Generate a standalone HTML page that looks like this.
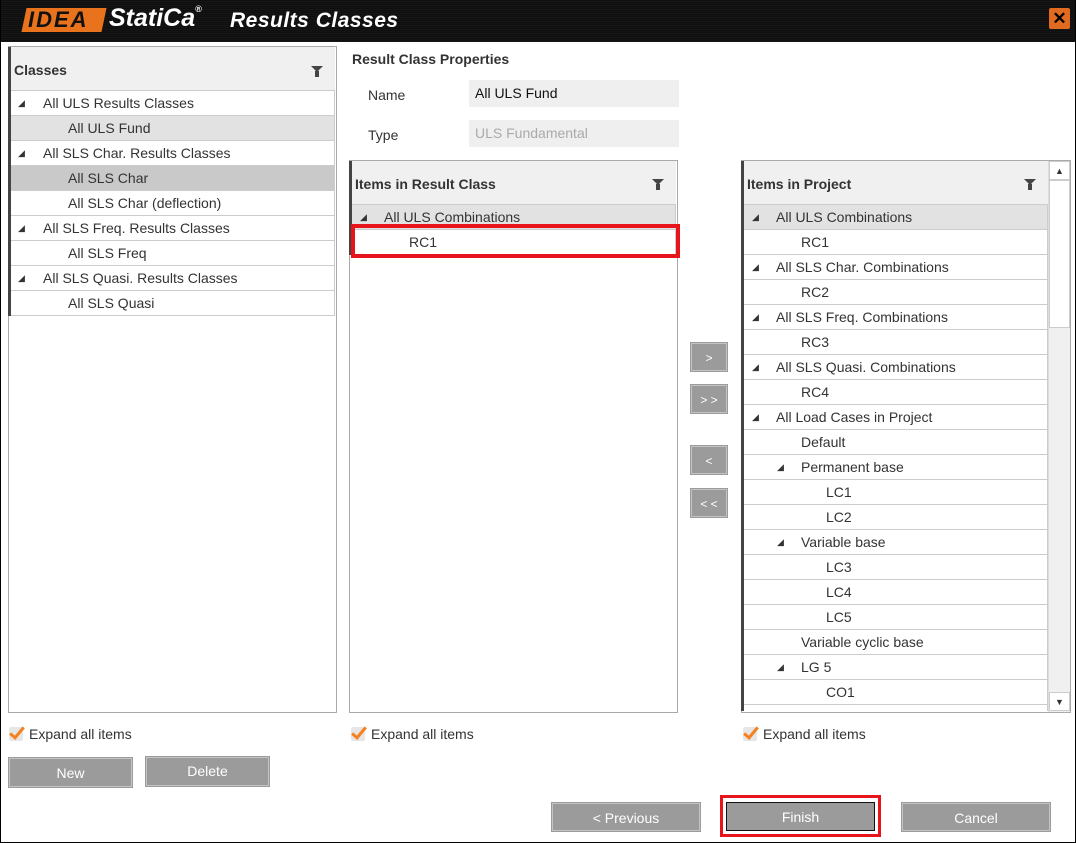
<!DOCTYPE html>
<html><head><meta charset="utf-8"><style>
*{margin:0;padding:0;box-sizing:border-box}
body{width:1076px;height:843px;background:#fff;font-family:"Liberation Sans",sans-serif;font-size:14px;color:#333;position:relative;overflow:hidden}
.a{position:absolute}
.frame{left:0;top:0;width:1076px;height:843px;border:1px solid #000;border-top:none;pointer-events:none}
.title{left:0;top:0;width:1076px;height:42px;background:repeating-linear-gradient(180deg,#0c0c0c 0,#1a1a1a 2px,#050505 3px,#222 4px)}
.box{border:1px solid #aaa;background:#fff}
.hdr{background:#f0f0f0;border-bottom:1px solid #ccc;font-weight:bold;font-size:14px;color:#333}
.bar{background:#444;width:3px}
.r{position:absolute;height:25px;border-bottom:1px solid #ccc;line-height:24px;white-space:nowrap;border-right:1px solid #ccc}
.t{position:absolute;font-size:9px;color:#333}
.btn{position:absolute;background:#9b9b9b;border:1px solid #c4c4c4;outline:1px solid #9b9b9b;color:#fff;text-align:center;font-size:14px}
.inp{position:absolute;background:#efefef;height:27px;line-height:27px;padding-left:6px}
.cb{position:absolute;width:14px;height:14px;background:#e6e6e6;border-radius:2px}
.cb:after{content:"";position:absolute;left:4px;top:-3px;width:5px;height:12px;border:solid #f58220;border-width:0 3px 3px 0;transform:rotate(40deg)}
.filt{position:absolute;width:0;height:0;border-left:6px solid transparent;border-right:6px solid transparent;border-top:6px solid #444}
.filt:after{content:"";position:absolute;left:-2px;top:-1px;width:4px;height:6px;background:#444}
</style></head><body>
<div class="a title"></div>
<div class="a" style="left:24px;top:8px;width:80px;height:24px;background:#e8731c;transform:skewX(-12deg)"></div>
<div class="a" style="left:28px;top:8px;font:italic bold 22px 'Liberation Sans',sans-serif;color:#111;letter-spacing:2px;line-height:24px">IDEA</div>
<div class="a" style="left:109px;top:4px;font:italic bold 25px 'Liberation Sans',sans-serif;color:#fff">StatiCa<sup style="font-size:9px;vertical-align:top">®</sup></div>
<div class="a" style="left:230px;top:9px;font:italic bold 21px 'Liberation Sans',sans-serif;color:#fff;letter-spacing:0.5px">Results Classes</div>
<div class="a" style="left:1049px;top:8px;width:21px;height:21px;background:#e06a20;border-radius:2px;color:#000;font:bold 17px 'Liberation Sans';text-align:center;line-height:21px">✕</div>

<!-- Left panel -->
<div class="a box" style="left:8px;top:46px;width:329px;height:667px"></div>
<div class="a hdr" style="left:9px;top:47px;width:326px;height:44px;line-height:46px;padding-left:5px">Classes</div>
<div class="filt" style="left:311px;top:66px"></div>
<div class="a bar" style="left:8px;top:47px;height:269px"></div>
<div class="r" style="left:11px;top:91px;width:324px"><span class="t" style="left:7px">◢</span><span class="a" style="left:32px">All ULS Results Classes</span></div>
<div class="r" style="left:11px;top:116px;width:324px;background:#e2e2e2"><span class="a" style="left:57px">All ULS Fund</span></div>
<div class="r" style="left:11px;top:141px;width:324px"><span class="t" style="left:7px">◢</span><span class="a" style="left:32px">All SLS Char. Results Classes</span></div>
<div class="r" style="left:11px;top:166px;width:324px;background:#c9c9c9"><span class="a" style="left:57px">All SLS Char</span></div>
<div class="r" style="left:11px;top:191px;width:324px"><span class="a" style="left:57px">All SLS Char (deflection)</span></div>
<div class="r" style="left:11px;top:216px;width:324px"><span class="t" style="left:7px">◢</span><span class="a" style="left:32px">All SLS Freq. Results Classes</span></div>
<div class="r" style="left:11px;top:241px;width:324px"><span class="a" style="left:57px">All SLS Freq</span></div>
<div class="r" style="left:11px;top:266px;width:324px"><span class="t" style="left:7px">◢</span><span class="a" style="left:32px">All SLS Quasi. Results Classes</span></div>
<div class="r" style="left:11px;top:291px;width:324px"><span class="a" style="left:57px">All SLS Quasi</span></div>

<div class="a" style="left:352px;top:51px;font-weight:bold">Result Class Properties</div>
<div class="a" style="left:368px;top:87px">Name</div>
<div class="inp" style="left:469px;top:80px;width:210px;color:#111">All ULS Fund</div>
<div class="a" style="left:368px;top:127px">Type</div>
<div class="inp" style="left:469px;top:120px;width:210px;color:#aaa">ULS Fundamental</div>

<!-- Middle -->
<div class="a box" style="left:349px;top:160px;width:329px;height:553px"></div>
<div class="a hdr" style="left:350px;top:161px;width:326px;height:44px;line-height:46px;padding-left:5px">Items in Result Class</div>
<div class="filt" style="left:652px;top:179px"></div>
<div class="a bar" style="left:349px;top:161px;height:94px"></div>
<div class="r" style="left:352px;top:205px;width:324px;background:#e2e2e2"><span class="t" style="left:8px">◢</span><span class="a" style="left:32px">All ULS Combinations</span></div>
<div class="r" style="left:352px;top:230px;width:324px"><span class="a" style="left:57px">RC1</span></div>
<div class="a" style="left:351px;top:224px;width:329px;height:34px;border:4px solid #e8141c"></div>

<!-- Arrows -->
<div class="btn" style="left:691px;top:343px;width:36px;height:28px;line-height:28px;font-size:12px">&gt;</div>
<div class="btn" style="left:691px;top:385px;width:36px;height:28px;line-height:28px;font-size:12px">&gt; &gt;</div>
<div class="btn" style="left:691px;top:446px;width:36px;height:28px;line-height:28px;font-size:12px">&lt;</div>
<div class="btn" style="left:691px;top:489px;width:36px;height:28px;line-height:28px;font-size:12px">&lt; &lt;</div>

<!-- Right -->
<div class="a box" style="left:741px;top:160px;width:330px;height:553px"></div>
<div class="a hdr" style="left:742px;top:161px;width:306px;height:44px;line-height:46px;padding-left:5px">Items in Project</div>
<div class="filt" style="left:1024px;top:179px"></div>
<div class="a bar" style="left:741px;top:161px;height:550px"></div>
<div class="a" style="left:1048px;top:161px;width:22px;height:551px;background:#f0f0f0;border-left:1px solid #ddd"></div>
<div class="a" style="left:1049px;top:161px;width:21px;height:19px;background:#fff;border:1px solid #ccc;font-size:9px;text-align:center;line-height:18px">▲</div>
<div class="a" style="left:1049px;top:180px;width:21px;height:148px;background:#fff;border:1px solid #ccc"></div>
<div class="a" style="left:1049px;top:692px;width:21px;height:19px;background:#fff;border:1px solid #ccc;font-size:9px;text-align:center;line-height:18px">▼</div>
<div class="a" style="left:744px;top:205px;width:304px;height:506px;overflow:hidden">
<div class="r" style="left:0;top:0;width:304px;background:#e2e2e2"><span class="t" style="left:8px">◢</span><span class="a" style="left:32px">All ULS Combinations</span></div>
<div class="r" style="left:0;top:25px;width:304px"><span class="a" style="left:57px">RC1</span></div>
<div class="r" style="left:0;top:50px;width:304px"><span class="t" style="left:8px">◢</span><span class="a" style="left:32px">All SLS Char. Combinations</span></div>
<div class="r" style="left:0;top:75px;width:304px"><span class="a" style="left:57px">RC2</span></div>
<div class="r" style="left:0;top:100px;width:304px"><span class="t" style="left:8px">◢</span><span class="a" style="left:32px">All SLS Freq. Combinations</span></div>
<div class="r" style="left:0;top:125px;width:304px"><span class="a" style="left:57px">RC3</span></div>
<div class="r" style="left:0;top:150px;width:304px"><span class="t" style="left:8px">◢</span><span class="a" style="left:32px">All SLS Quasi. Combinations</span></div>
<div class="r" style="left:0;top:175px;width:304px"><span class="a" style="left:57px">RC4</span></div>
<div class="r" style="left:0;top:200px;width:304px"><span class="t" style="left:8px">◢</span><span class="a" style="left:32px">All Load Cases in Project</span></div>
<div class="r" style="left:0;top:225px;width:304px"><span class="a" style="left:57px">Default</span></div>
<div class="r" style="left:0;top:250px;width:304px"><span class="t" style="left:33px">◢</span><span class="a" style="left:57px">Permanent base</span></div>
<div class="r" style="left:0;top:275px;width:304px"><span class="a" style="left:82px">LC1</span></div>
<div class="r" style="left:0;top:300px;width:304px"><span class="a" style="left:82px">LC2</span></div>
<div class="r" style="left:0;top:325px;width:304px"><span class="t" style="left:33px">◢</span><span class="a" style="left:57px">Variable base</span></div>
<div class="r" style="left:0;top:350px;width:304px"><span class="a" style="left:82px">LC3</span></div>
<div class="r" style="left:0;top:375px;width:304px"><span class="a" style="left:82px">LC4</span></div>
<div class="r" style="left:0;top:400px;width:304px"><span class="a" style="left:82px">LC5</span></div>
<div class="r" style="left:0;top:425px;width:304px"><span class="a" style="left:57px">Variable cyclic base</span></div>
<div class="r" style="left:0;top:450px;width:304px"><span class="t" style="left:33px">◢</span><span class="a" style="left:57px">LG 5</span></div>
<div class="r" style="left:0;top:475px;width:304px"><span class="a" style="left:82px">CO1</span></div>
<div class="r" style="left:0;top:500px;width:304px"></div>
</div>

<div class="cb" style="left:9px;top:727px"></div><div class="a" style="left:29px;top:726px">Expand all items</div>
<div class="cb" style="left:351px;top:727px"></div><div class="a" style="left:371px;top:726px">Expand all items</div>
<div class="cb" style="left:743px;top:727px"></div><div class="a" style="left:763px;top:726px">Expand all items</div>

<div class="btn" style="left:9px;top:758px;width:123px;height:29px;line-height:29px">New</div>
<div class="btn" style="left:146px;top:757px;width:123px;height:29px;line-height:27px">Delete</div>
<div class="btn" style="left:552px;top:803px;width:148px;height:28px;line-height:28px">&lt; Previous</div>
<div class="a" style="left:720px;top:795px;width:161px;height:42px;border:3px solid #e8141c"></div>
<div class="btn" style="left:726px;top:802px;width:149px;height:29px;line-height:29px;border:1px solid #111;outline:none">Finish</div>
<div class="btn" style="left:902px;top:803px;width:148px;height:28px;line-height:28px">Cancel</div>
<div class="a frame"></div>
</body></html>
